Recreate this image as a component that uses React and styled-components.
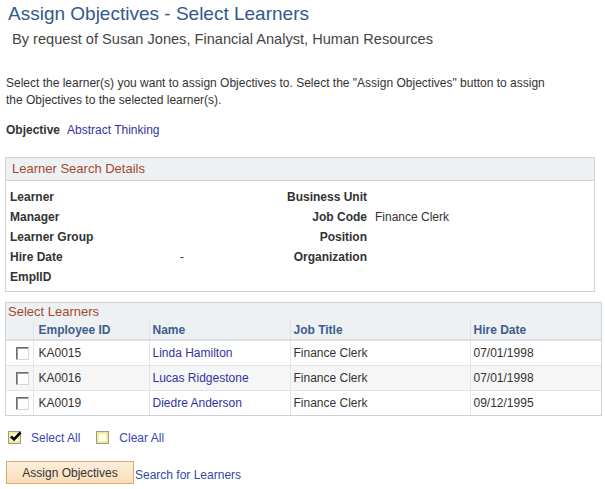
import React from "react";
import styled, { createGlobalStyle } from "styled-components";

const Global = createGlobalStyle`
  html, body { margin: 0; padding: 0; background: #fff; }
  body {
    font-family: "Liberation Sans", Arial, sans-serif;
    font-size: 12px;
    color: #333;
  }
`;

const Page = styled.div`
  width: 605px;
  padding: 0 0 0 5px;
  box-sizing: border-box;
`;

const Title = styled.h1`
  margin: 0;
  padding: 3px 0 0 3px;
  font-weight: normal;
  font-size: 19px;
  line-height: 22px;
  color: #34588b;
`;

const Subtitle = styled.h2`
  margin: 5px 0 0 7px;
  font-weight: normal;
  font-size: 14.6px;
  line-height: 18px;
  color: #444;
`;

const Instructions = styled.p`
  margin: 27px 0 0 1px;
  max-width: 556px;
  font-size: 12px;
  line-height: 17px;
  color: #333;
`;

const ObjectiveRow = styled.div`
  margin: 13px 0 0 1px;
  display: flex;
  gap: 7px;
  line-height: 17px;
`;

const Label = styled.span`
  font-weight: bold;
  color: #333;
`;

const Link = styled.a`
  color: #33339f;
  text-decoration: none;
  cursor: pointer;
`;

const Box = styled.section`
  margin-top: ${(p) => p.$mt}px;
  width: ${(p) => p.$w}px;
  border: 1px solid #cfd3d5;
  box-sizing: border-box;
`;

const BoxHeader = styled.div`
  height: ${(p) => p.$h}px;
  line-height: ${(p) => p.$h}px;
  padding-left: ${(p) => p.$pl}px;
  background: #eef1f3;
  border-bottom: ${(p) => (p.$line ? "1px solid #cfd3d5" : "none")};
  font-size: 13px;
  color: #a24a2e;
`;

const DetailsGrid = styled.div`
  display: grid;
  grid-template-columns: 170px 100px 87px 1fr;
  grid-auto-rows: 20px;
  align-items: center;
  padding: 6px 0 4px 4px;
`;

const DLabel = styled.span`
  font-weight: bold;
  color: #333;
  text-align: ${(p) => (p.$right ? "right" : "left")};
`;

const DValue = styled.span`
  color: #333;
  padding-left: ${(p) => p.$pl || 0}px;
`;

const Table = styled.table`
  width: 100%;
  border-collapse: collapse;
  table-layout: fixed;
`;

const Th = styled.th`
  height: 19px;
  padding: 0 0 0 ${(p) => p.$pl ?? 5}px;
  background: #eef1f3;
  border-right: 1px solid #dfe2e4;
  border-bottom: 2px solid #dde0e2;
  text-align: left;
  font-weight: bold;
  font-size: 12px;
  color: #3d5d8c;
  &:last-child { border-right: none; }
`;

const Td = styled.td`
  height: 24px;
  padding: 0 0 0 ${(p) => p.$pl ?? 5}px;
  border-right: 1px solid #e2e4e6;
  border-bottom: 1px solid #e2e4e6;
  background: ${(p) => (p.$alt ? "#f6f6f6" : "#fff")};
  text-align: left;
  color: #333;
  &:last-child { border-right: none; }
  tr:last-child & { border-bottom: none; }
`;

const RowCheck = styled.span`
  display: inline-block;
  width: 11px;
  height: 11px;
  vertical-align: middle;
  border: 1px solid;
  border-color: #6e6e6e #d6d6d6 #d6d6d6 #6e6e6e;
  box-shadow: inset 1px 1px 0 #9a9a9a;
  background: #fff;
  margin-top: 1px;
`;

const SelectBar = styled.div`
  margin-top: 12px;
  display: flex;
  align-items: center;
  padding-left: 3px;
  height: 18px;
`;

const MarkBox = styled.span`
  position: relative;
  display: inline-block;
  width: 13px;
  height: 13px;
  box-sizing: border-box;
  border: 1px solid #9a9a9a;
  box-shadow: inset 0 0 0 2px #f3f08a;
  background: #fff;
  margin-right: ${(p) => p.$mr}px;
`;

const Check = styled.svg`
  position: absolute;
  left: 0px;
  top: -2px;
`;

const SelectLink = styled(Link)`
  margin-right: ${(p) => p.$mr || 0}px;
  color: #3a45b0;
  margin-top: 2px;
`;

const ActionBar = styled.div`
  margin-top: 15px;
  display: flex;
  align-items: center;
  padding-left: 1px;
`;

const Button = styled.button`
  width: 128px;
  height: 23px;
  padding: 0;
  border: 1px solid #e0a66d;
  background: linear-gradient(#fdeedb, #f9ddb9);
  font-family: "Liberation Sans", Arial, sans-serif;
  font-size: 12px;
  color: #333;
  cursor: pointer;
`;

const ActionLink = styled(Link)`
  margin-left: 1px;
  margin-top: 4px;
  color: #2f4aa8;
`;

const rows = [
  { id: "KA0015", name: "Linda Hamilton", job: "Finance Clerk", date: "07/01/1998" },
  { id: "KA0016", name: "Lucas Ridgestone", job: "Finance Clerk", date: "07/01/1998" },
  { id: "KA0019", name: "Diedre Anderson", job: "Finance Clerk", date: "09/12/1995" },
];

export default function App() {
  return (
    <>
      <Global />
      <Page>
        <Title>Assign Objectives - Select Learners</Title>
        <Subtitle>By request of Susan Jones, Financial Analyst, Human Resources</Subtitle>
        <Instructions>
          Select the learner(s) you want to assign Objectives to. Select the "Assign Objectives" button to assign
          the Objectives to the selected learner(s).
        </Instructions>
        <ObjectiveRow>
          <Label>Objective</Label>
          <Link>Abstract Thinking</Link>
        </ObjectiveRow>

        <Box $mt={18} $w={590}>
          <BoxHeader $h={22} $pl={6} $line>Learner Search Details</BoxHeader>
          <DetailsGrid>
            <DLabel>Learner</DLabel>
            <DValue />
            <DLabel $right>Business Unit</DLabel>
            <DValue />
            <DLabel>Manager</DLabel>
            <DValue />
            <DLabel $right>Job Code</DLabel>
            <DValue $pl={8}>Finance Clerk</DValue>
            <DLabel>Learner Group</DLabel>
            <DValue />
            <DLabel $right>Position</DLabel>
            <DValue />
            <DLabel>Hire Date</DLabel>
            <DValue>-</DValue>
            <DLabel $right>Organization</DLabel>
            <DValue />
            <DLabel>EmplID</DLabel>
            <DValue />
            <DValue />
            <DValue />
          </DetailsGrid>
        </Box>

        <Box $mt={10} $w={597}>
          <BoxHeader $h={17} $pl={2}>Select Learners</BoxHeader>
          <Table>
            <colgroup>
              <col style={{ width: 27 }} />
              <col style={{ width: 116 }} />
              <col style={{ width: 141 }} />
              <col style={{ width: 180 }} />
              <col />
            </colgroup>
            <thead>
              <tr>
                <Th />
                <Th>Employee ID</Th>
                <Th $pl={3}>Name</Th>
                <Th $pl={3}>Job Title</Th>
                <Th $pl={3}>Hire Date</Th>
              </tr>
            </thead>
            <tbody>
              {rows.map((r, i) => (
                <tr key={r.id}>
                  <Td $alt={i === 1} $pl={10}>
                    <RowCheck />
                  </Td>
                  <Td $alt={i === 1}>{r.id}</Td>
                  <Td $alt={i === 1} $pl={3}>
                    <Link>{r.name}</Link>
                  </Td>
                  <Td $alt={i === 1} $pl={3}>{r.job}</Td>
                  <Td $alt={i === 1} $pl={3}>{r.date}</Td>
                </tr>
              ))}
            </tbody>
          </Table>
        </Box>

        <SelectBar>
          <MarkBox $mr={10}>
            <Check width="13" height="13" viewBox="0 0 13 13">
              <path d="M2 6.5 L5 9.5 L11.5 2.5" fill="none" stroke="#000" strokeWidth="2.6" />
            </Check>
          </MarkBox>
          <SelectLink $mr={16}>Select All</SelectLink>
          <MarkBox $mr={10} />
          <SelectLink>Clear All</SelectLink>
        </SelectBar>

        <ActionBar>
          <Button>Assign Objectives</Button>
          <ActionLink>Search for Learners</ActionLink>
        </ActionBar>
      </Page>
    </>
  );
}
